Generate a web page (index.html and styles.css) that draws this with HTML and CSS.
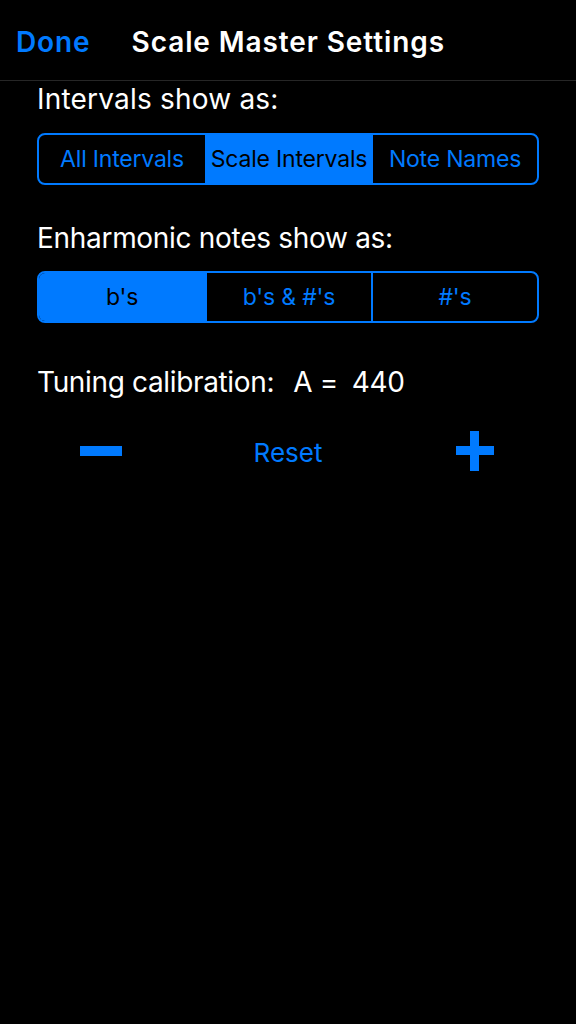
FILE: index.html
```html
<!DOCTYPE html>
<html lang="en">
<head>
<meta charset="utf-8">
<title>Scale Master Settings</title>
<link rel="stylesheet" href="styles.css">
</head>
<body>
<div class="screen">
  <header class="navbar">
    <button class="done">Done</button>
    <h1 class="title">Scale Master Settings</h1>
  </header>

  <main class="content">
    <p class="label first">Intervals show as:</p>
    <div class="segmented first-seg">
      <button class="seg">All Intervals</button>
      <button class="seg selected">Scale Intervals</button>
      <button class="seg">Note Names</button>
    </div>

    <p class="label second">Enharmonic notes show as:</p>
    <div class="segmented">
      <button class="seg selected">b's</button>
      <button class="seg">b's &amp; #'s</button>
      <button class="seg">#'s</button>
    </div>

    <p class="label tuning">Tuning calibration:<span class="note">A =</span><span class="freq">440</span></p>

    <div class="stepper">
      <button class="step minus" aria-label="Decrease">
        <svg width="42" height="10" viewBox="0 0 42 10"><rect x="0" y="0" width="42" height="10" fill="#007aff"/></svg>
      </button>
      <button class="reset">Reset</button>
      <button class="step plus" aria-label="Increase">
        <svg width="38" height="40" viewBox="0 0 38 40"><rect x="0" y="15" width="38" height="9" fill="#007aff"/><rect x="14" y="0" width="9" height="40" fill="#007aff"/></svg>
      </button>
    </div>
  </main>
</div>
</body>
</html>
```

FILE: styles.css
```css
* { box-sizing: border-box; }

html, body {
  margin: 0;
  padding: 0;
  background: #000;
}

body {
  font-family: Inter, "Noto Sans", sans-serif;
  color: #fff;
  width: 576px;
  height: 1024px;
  overflow: hidden;
}

button {
  font-family: inherit;
  background: none;
  border: none;
  padding: 0;
  margin: 0;
  cursor: pointer;
}

/* top navigation bar */
.navbar {
  height: 81px;
  display: flex;
  align-items: center;
  padding: 4px 0 0 16px;
  border-bottom: 1px solid #262626;
}

.done {
  color: #007aff;
  font-size: 28px;
  font-weight: 600;
  letter-spacing: 0.9px;
  line-height: 34px;
}

.title {
  margin: 0 0 0 41px;
  font-size: 28px;
  font-weight: 600;
  letter-spacing: 0.9px;
  line-height: 34px;
}

/* settings body */
.content {
  padding: 0 37px;
}

.label {
  margin: 0;
  font-size: 28px;
  font-weight: 400;
  line-height: 34px;
  white-space: nowrap;
}

.label.first { margin-top: 1px; letter-spacing: 0.2px; }
.label.second { margin-top: 36px; letter-spacing: -0.3px; }
.label.tuning { margin-top: 42px; letter-spacing: -0.35px; }

.note { margin-left: 19px; }
.freq { margin-left: 14px; }

/* segmented controls */
.segmented {
  margin-top: 16px;
  height: 52px;
  display: grid;
  grid-template-columns: 1fr 1fr 1fr;
  border: 2px solid #007aff;
  border-radius: 8px;
  overflow: hidden;
}

.segmented.first-seg { margin-top: 17px; }

.seg {
  color: #007aff;
  font-size: 23px;
  letter-spacing: -0.2px;
  border-left: 2px solid #007aff;
  white-space: nowrap;
}

.seg:first-child { border-left: none; }

.seg.selected {
  background: #007aff;
  color: #000;
}

/* tuning stepper */
.stepper {
  margin-top: 32px;
  height: 40px;
  display: grid;
  grid-template-columns: 1fr 1fr 1fr;
  align-items: center;
}

.step {
  display: flex;
  align-items: center;
}

.minus { justify-self: start; margin-left: 43px; }
.plus { justify-self: end; margin-right: 45px; }

.reset {
  justify-self: center;
  color: #007aff;
  font-size: 26px;
  line-height: 32px;
  padding-top: 3px;
}
```
